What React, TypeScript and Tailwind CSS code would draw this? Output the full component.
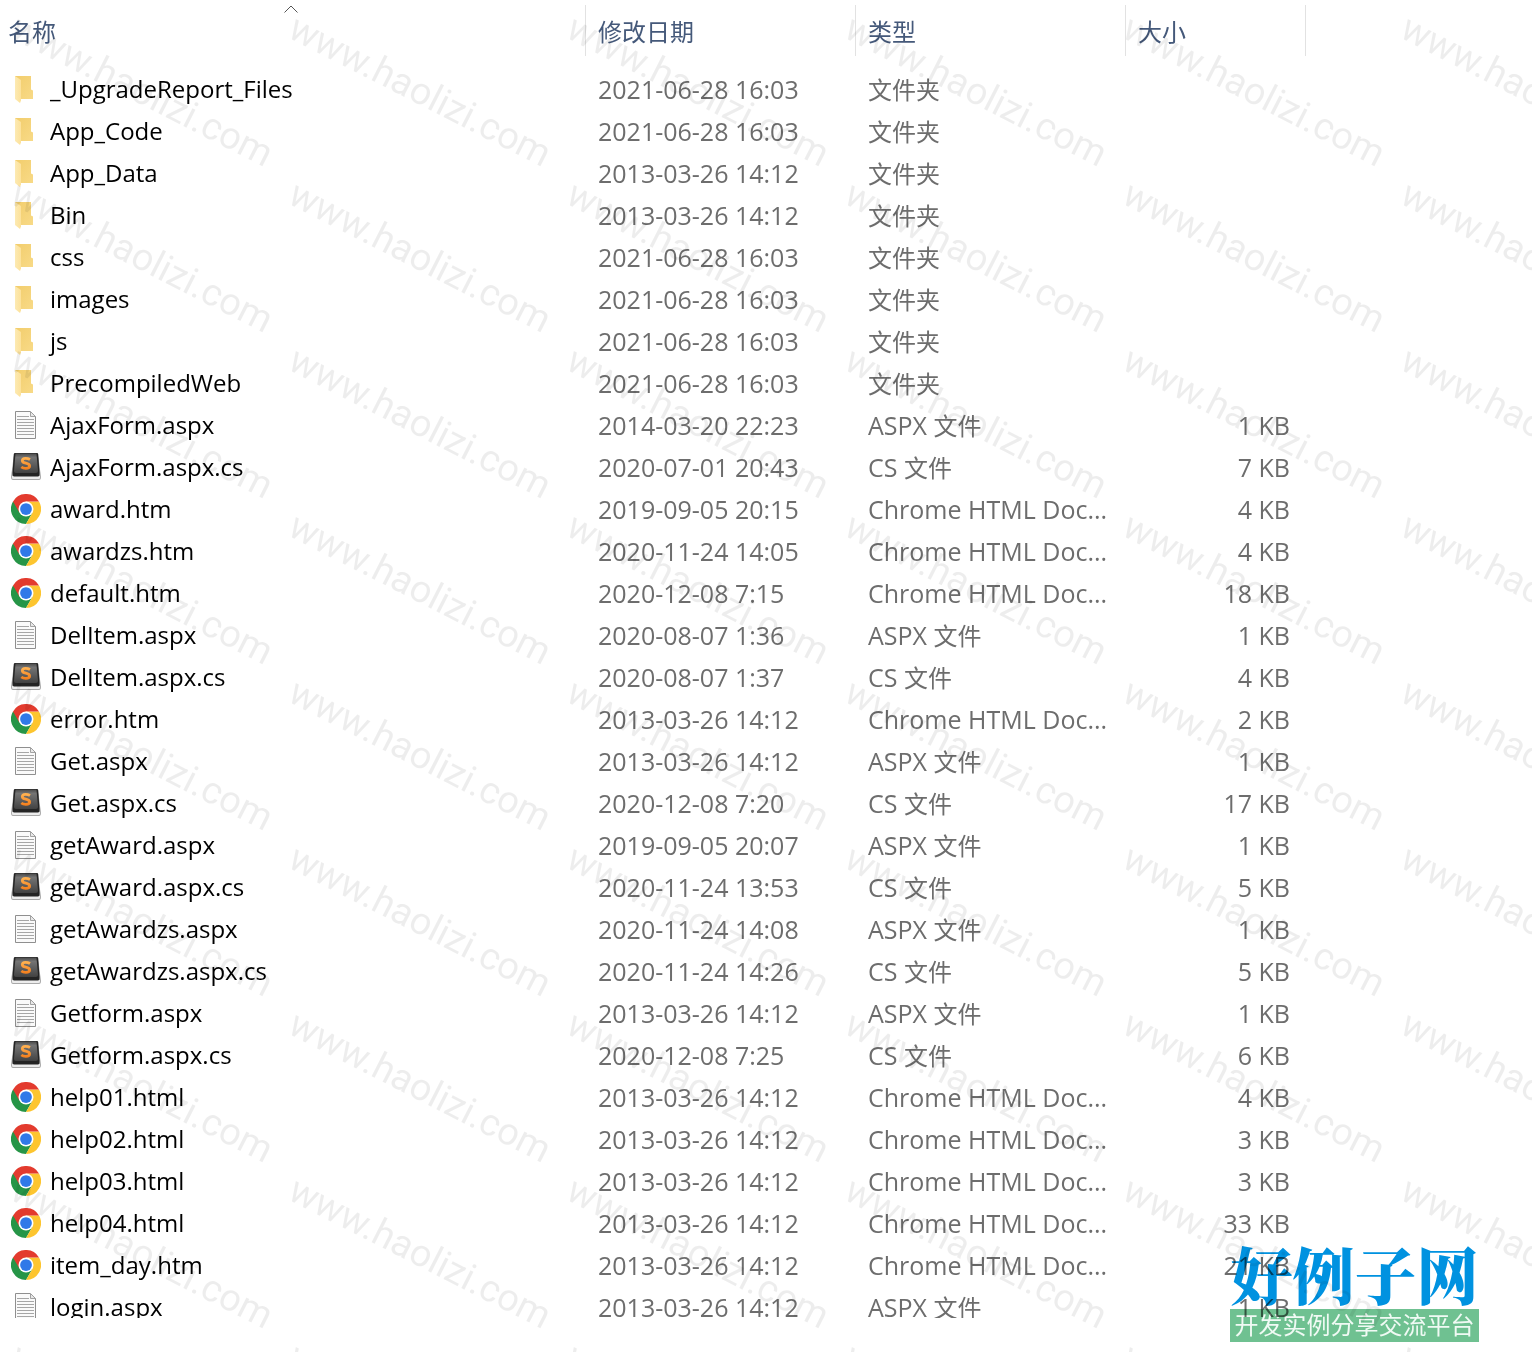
import React from "react";

type Kind = "folder" | "doc" | "cs" | "chrome";
type Entry = [name: string, date: string, kind: Kind, size?: string];

const ENTRIES: Entry[] = [
  ["_UpgradeReport_Files", "2021-06-28 16:03", "folder"],
  ["App_Code", "2021-06-28 16:03", "folder"],
  ["App_Data", "2013-03-26 14:12", "folder"],
  ["Bin", "2013-03-26 14:12", "folder"],
  ["css", "2021-06-28 16:03", "folder"],
  ["images", "2021-06-28 16:03", "folder"],
  ["js", "2021-06-28 16:03", "folder"],
  ["PrecompiledWeb", "2021-06-28 16:03", "folder"],
  ["AjaxForm.aspx", "2014-03-20 22:23", "doc", "1 KB"],
  ["AjaxForm.aspx.cs", "2020-07-01 20:43", "cs", "7 KB"],
  ["award.htm", "2019-09-05 20:15", "chrome", "4 KB"],
  ["awardzs.htm", "2020-11-24 14:05", "chrome", "4 KB"],
  ["default.htm", "2020-12-08 7:15", "chrome", "18 KB"],
  ["DelItem.aspx", "2020-08-07 1:36", "doc", "1 KB"],
  ["DelItem.aspx.cs", "2020-08-07 1:37", "cs", "4 KB"],
  ["error.htm", "2013-03-26 14:12", "chrome", "2 KB"],
  ["Get.aspx", "2013-03-26 14:12", "doc", "1 KB"],
  ["Get.aspx.cs", "2020-12-08 7:20", "cs", "17 KB"],
  ["getAward.aspx", "2019-09-05 20:07", "doc", "1 KB"],
  ["getAward.aspx.cs", "2020-11-24 13:53", "cs", "5 KB"],
  ["getAwardzs.aspx", "2020-11-24 14:08", "doc", "1 KB"],
  ["getAwardzs.aspx.cs", "2020-11-24 14:26", "cs", "5 KB"],
  ["Getform.aspx", "2013-03-26 14:12", "doc", "1 KB"],
  ["Getform.aspx.cs", "2020-12-08 7:25", "cs", "6 KB"],
  ["help01.html", "2013-03-26 14:12", "chrome", "4 KB"],
  ["help02.html", "2013-03-26 14:12", "chrome", "3 KB"],
  ["help03.html", "2013-03-26 14:12", "chrome", "3 KB"],
  ["help04.html", "2013-03-26 14:12", "chrome", "33 KB"],
  ["item_day.htm", "2013-03-26 14:12", "chrome", "21 KB"],
  ["login.aspx", "2013-03-26 14:12", "doc", "1 KB"],
];

function FolderIcon() {
  return (
    <svg viewBox="0 0 30 30" className="size-[30px]" aria-hidden="true">
      <defs>
        <linearGradient id="folderBack" x1="0" y1="0" x2="1" y2="1">
          <stop offset="0" stopColor="#f2cd6c" />
          <stop offset="1" stopColor="#f8da87" />
        </linearGradient>
        <linearGradient id="folderFront" x1="0" y1="0" x2="1" y2="0">
          <stop offset="0" stopColor="#fdeab3" />
          <stop offset="1" stopColor="#fce19a" />
        </linearGradient>
      </defs>
      <path d="M4 2H20V15.500L22 16.500V25H4Z" fill="url(#folderBack)" />
      <path d="M4 2L10 6V26.500L9 29L4 25Z" fill="url(#folderFront)" />
    </svg>
  );
}

function DocIcon() {
  return (
    <svg viewBox="0 0 30 30" className="size-[30px]" aria-hidden="true">
      <path d="M4.500 1.500H19L24.500 7V28.500H4.500Z" fill="#fafafa" stroke="#8f8f8f" />
      <path d="M19.500 1.500V6.500H24.500Z" fill="#e8e8e8" stroke="#8f8f8f" strokeWidth=".8" />
      <path
        d="M6 6.500H18M6 9.500H23M6 12.500H23M6 15.500H23M6 18.500H23M6 21.500H23M6 24.500H23"
        stroke="#a6a6a6"
      />
    </svg>
  );
}

function SublimeIcon() {
  return (
    <svg viewBox="0 0 30 30" className="size-[30px]" aria-hidden="true">
      <defs>
        <linearGradient id="keyFace" x1="0" y1="0" x2="0" y2="1">
          <stop offset="0" stopColor="#4a4a4a" />
          <stop offset=".2" stopColor="#747474" />
          <stop offset="1" stopColor="#424242" />
        </linearGradient>
        <linearGradient id="keyLetter" x1="0" y1="0" x2="0" y2="1">
          <stop offset="0" stopColor="#ffb04f" />
          <stop offset="1" stopColor="#f58220" />
        </linearGradient>
      </defs>
      <path d="M3 2H27L30 25Q30 28 28 28H2Q0 28 0 25Z" fill="#a9a9a9" />
      <path d="M1 24H29V26Q29 27 27.500 27H2.500Q1 27 1 26Z" fill="#ececec" />
      <path d="M4 1H26Q27 1 27.200 2L28.500 21Q28.500 24.500 27 24.500H3Q1.500 24.500 1.500 21L2.800 2Q3 1 4 1Z" fill="#242424" />
      <path d="M4.500 1.500H25.500L27 19Q27 21 25 21H5Q3 21 3 19Z" fill="url(#keyFace)" />
      <path
        d="M19 7.500Q17 6.300 14.500 6.300Q11.300 6.300 11.300 8.700Q11.300 10.500 14.800 11.200Q18.600 12 18.600 14Q18.600 16.400 14.800 16.400Q12 16.400 10.300 15"
        fill="none"
        stroke="url(#keyLetter)"
        strokeWidth="2.800"
      />
    </svg>
  );
}

function ChromeIcon() {
  return (
    <svg viewBox="0 0 48 48" className="size-[30px]" aria-hidden="true">
      <path d="M3.200 12A24 24 0 0 0 24 48L34.400 30L24 24Z" fill="#269547" />
      <path d="M44.800 12A24 24 0 0 1 24 48L34.400 30L24 12Z" fill="#fdc52f" />
      <path d="M24 12H44.800A24 24 0 0 0 3.200 12L13.600 30Z" fill="#e33b2e" />
      <circle cx="24" cy="24" r="12" fill="#fff" />
      <circle cx="24" cy="24" r="9.400" fill="#3079e8" />
    </svg>
  );
}

const ICONS: Record<Kind, () => React.JSX.Element> = {
  folder: FolderIcon,
  doc: DocIcon,
  cs: SublimeIcon,
  chrome: ChromeIcon,
};

function TypeLabel({ kind }: { kind: Kind }) {
  if (kind === "folder") return <span className="text-[24px]">文件夹</span>;
  if (kind === "chrome") return <>Chrome HTML Doc...</>;
  return (
    <>
      {kind === "doc" ? "ASPX " : "CS "}
      <span className="text-[24px]">文件</span>
    </>
  );
}

function HeaderCell({ label, first }: { label: string; first?: boolean }) {
  return (
    <th scope="col" className="p-0 pt-[5px] align-top font-normal">
      <button
        type="button"
        className={
          "relative flex h-[51px] w-full items-center border-r border-[#e2e2e2] pt-[2px] text-left text-[24px] text-[#45597a] " +
          (first ? "pl-2" : "pl-3")
        }
      >
        {label}
        {first && (
          <svg viewBox="0 0 14 8" className="absolute top-0 left-[284px] h-2 w-[14px]" aria-hidden="true">
            <path d="M.500 7.500L7 1L13.500 7.500" fill="none" stroke="#555" />
          </svg>
        )}
      </button>
    </th>
  );
}

function Watermark() {
  return (
    <div
      aria-hidden="true"
      className="pointer-events-none absolute inset-0 grid auto-rows-[166px] grid-cols-[repeat(6,278px)] overflow-hidden pt-[9px] pl-[22px] select-none"
    >
      {Array.from({ length: 54 }, (_, i) => (
        <div key={i} className="h-0 w-0">
          <span className="block w-max origin-top-left rotate-27 font-[Roboto,sans-serif] text-[38px] leading-[36px] text-black/7">
            www.haolizi.com
          </span>
        </div>
      ))}
    </div>
  );
}

function SiteBadge() {
  return (
    <div className="absolute right-[53px] bottom-[10px] w-[249px] text-center whitespace-nowrap mix-blend-multiply">
      <div className="font-['Noto_Serif_CJK_SC','Noto_Sans_CJK_SC',serif] text-[62px] leading-[70px] font-black text-[#0092e0]">
        好例子网
      </div>
      <div className="h-[33px] bg-[#6fc191] text-[24px] leading-[32px] text-[#f0faf4]">开发实例分享交流平台</div>
    </div>
  );
}

export default function App() {
  return (
    <main className="relative flex h-screen flex-col overflow-hidden bg-white pb-[34px] font-['Open_Sans','Noto_Sans_CJK_SC',sans-serif] text-[25px] leading-[42px] text-[#6d6d6d]">
      <div className="min-h-0 flex-1 overflow-hidden">
        <table className="w-full table-fixed border-collapse">
          <colgroup>
            <col className="w-[586px]" />
            <col className="w-[270px]" />
            <col className="w-[270px]" />
            <col className="w-[180px]" />
            <col />
          </colgroup>
          <thead>
            <tr className="h-[68px]">
              <HeaderCell label="名称" first />
              <HeaderCell label="修改日期" />
              <HeaderCell label="类型" />
              <HeaderCell label="大小" />
              <td />
            </tr>
          </thead>
          <tbody className="whitespace-nowrap">
            {ENTRIES.map(([name, date, kind, size]) => {
              const Icon = ICONS[kind];
              return (
                <tr key={name} className="h-[42px]">
                  <td className="p-0 text-[24px] text-black">
                    <div className="flex h-[42px] items-center gap-[9px] pl-[11px]">
                      <Icon />
                      <span>{name}</span>
                    </div>
                  </td>
                  <td className="p-0 pl-3">
                    <div className="h-[42px]">{date}</div>
                  </td>
                  <td className="p-0 pl-3">
                    <div className="h-[42px]">
                      <TypeLabel kind={kind} />
                    </div>
                  </td>
                  <td className="p-0 pr-4 text-right">
                    <div className="h-[42px]">{size}</div>
                  </td>
                  <td />
                </tr>
              );
            })}
          </tbody>
        </table>
      </div>
      <SiteBadge />
      <Watermark />
    </main>
  );
}
